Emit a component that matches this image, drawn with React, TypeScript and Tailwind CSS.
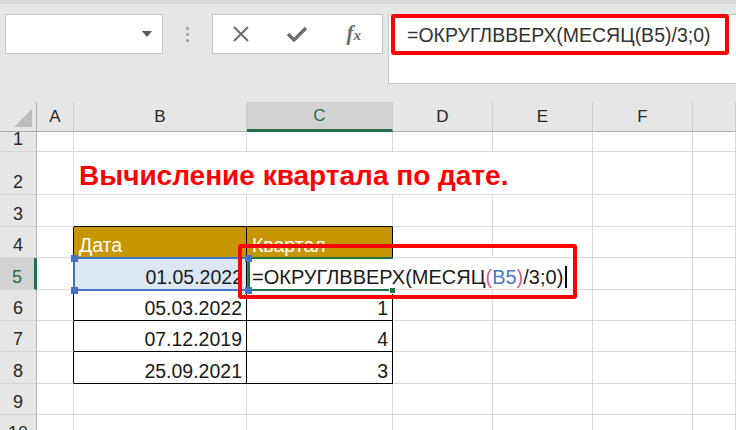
import type { ReactNode } from "react"

const GRID = "border-[#dadada]"

function Cell({
    w,
    b = `border-r border-b ${GRID}`,
    className = "",
    children,
}: {
    w: string
    b?: string
    className?: string
    children?: ReactNode
}) {
    return (
        <div className={`${w} ${b} shrink-0 flex items-end overflow-visible whitespace-nowrap pb-[2px] ${className}`}>
            {children}
        </div>
    )
}

function Row({ n, h, active = false, children }: { n: number; h: string; active?: boolean; children: ReactNode }) {
    return (
        <div className={`flex ${h}`}>
            <div
                className={`w-[37px] shrink-0 flex items-end justify-center pb-[3px] text-[18px] leading-[18px] border-b border-b-[#d4d4d4] overflow-hidden ${
                    active
                        ? "bg-[#d2d2d2] text-[#1e6e42] border-r-[3px] border-r-[#217346]"
                        : "bg-[#e6e6e6] text-[#262626] border-r border-r-[#b4b4b4]"
                }`}
            >
                {n}
            </div>
            {children}
        </div>
    )
}

function FormulaBar() {
    return (
        <div className="h-[102px] bg-[#e6e6e6] border-t-[4px] border-t-[#d9d9d9] flex items-start pt-[10px]">
            <div className="ml-[5px] w-[158px] h-[40px] bg-white border border-[#c6c6c6] flex items-center justify-end pr-[10px]">
                <div className="w-0 h-0 border-l-[5px] border-r-[5px] border-t-[6px] border-l-transparent border-r-transparent border-t-[#5a5a5a]" />
            </div>
            <div className="w-[49px] h-[40px] flex flex-col items-center justify-center gap-[3px]">
                <span className="w-[3px] h-[3px] rounded-full bg-[#9a9a9a]" />
                <span className="w-[3px] h-[3px] rounded-full bg-[#9a9a9a]" />
                <span className="w-[3px] h-[3px] rounded-full bg-[#9a9a9a]" />
            </div>
            <div className="w-[171px] h-[40px] bg-white border border-[#c6c6c6] flex items-center">
                <div className="w-[57px] flex justify-center">
                    <svg width="18" height="16" viewBox="0 0 18 16">
                        <path d="M2 1 L16 15 M16 1 L2 15" stroke="#6b6b6b" strokeWidth="2" fill="none" />
                    </svg>
                </div>
                <div className="w-[57px] flex justify-center">
                    <svg width="22" height="16" viewBox="0 0 22 16">
                        <path d="M2 8 L8 14 L20 2" stroke="#6b6b6b" strokeWidth="3.2" fill="none" strokeLinejoin="round" />
                    </svg>
                </div>
                <div className="w-[57px] flex justify-center">
                    <span className="font-['Liberation_Serif',serif] italic text-[21px] leading-[20px] text-[#6b6b6b] font-bold">
                        f<span className="text-[15px]">x</span>
                    </span>
                </div>
            </div>
            <div className="ml-[5px] flex-1 h-[70px] bg-white border border-r-0 border-[#c6c6c6] pl-[18px] pt-[10px]">
                <span className="text-[19.5px] leading-[20px] text-[#333333]">=ОКРУГЛВВЕРХ(МЕСЯЦ(B5)/3;0)</span>
            </div>
        </div>
    )
}

function ColHeader({ w, label, active = false }: { w: string; label: string; active?: boolean }) {
    return (
        <div
            className={`${w} shrink-0 flex items-center justify-center text-[17px] border-r border-r-[#cdcdcd] ${
                active
                    ? "bg-[#d2d2d2] text-[#1e6e42] border-b-[3px] border-b-[#217346]"
                    : "bg-[#e6e6e6] text-[#262626] border-b border-b-[#ababab]"
            }`}
        >
            {label}
        </div>
    )
}

function Sheet() {
    const black = "border-r border-b border-black"
    return (
        <div className="flex flex-col text-[19.5px] leading-[20px] text-[#1a1a1a]">
            <div className="flex h-[30px]">
                <div className="w-[37px] shrink-0 bg-[#e6e6e6] border-r border-b border-[#ababab] flex items-end justify-end pr-[4px] pb-[4px]">
                    <svg width="18" height="18" viewBox="0 0 18 18">
                        <polygon points="0,18 18,18 18,0" fill="#bdbdbd" />
                    </svg>
                </div>
                <ColHeader w="w-[37px]" label="A" />
                <ColHeader w="w-[173px]" label="B" />
                <ColHeader w="w-[146px]" label="C" active />
                <ColHeader w="w-[100px]" label="D" />
                <ColHeader w="w-[100px]" label="E" />
                <ColHeader w="w-[100px]" label="F" />
                <ColHeader w="w-[43px]" label="" />
            </div>

            <Row n={1} h="h-[20px]">
                <Cell w="w-[37px]" />
                <Cell w="w-[173px]" />
                <Cell w="w-[146px]" />
                <Cell w="w-[100px]" />
                <Cell w="w-[100px]" />
                <Cell w="w-[100px]" />
                <Cell w="w-[43px]" />
            </Row>

            <Row n={2} h="h-[43px]">
                <Cell w="w-[37px]" />
                <Cell w="w-[519px]" className="pl-[5px] pb-[4px]">
                    <span className="text-[28px] leading-[28px] font-bold text-[#ff0000]">Вычисление квартала по дате.</span>
                </Cell>
                <Cell w="w-[100px]" />
                <Cell w="w-[43px]" />
            </Row>

            <Row n={3} h="h-[32px]">
                <Cell w="w-[37px]" />
                <Cell w="w-[173px]" b={`border-r ${GRID} border-b border-b-black`} />
                <Cell w="w-[146px]" b={`border-r ${GRID} border-b border-b-black`} />
                <Cell w="w-[100px]" />
                <Cell w="w-[100px]" />
                <Cell w="w-[100px]" />
                <Cell w="w-[43px]" />
            </Row>

            <Row n={4} h="h-[31px]">
                <Cell w="w-[37px]" b={`border-b ${GRID} border-r border-r-black`} />
                <Cell w="w-[173px]" b={black} className="bg-[#c79500] pl-[5px] text-white">
                    Дата
                </Cell>
                <Cell w="w-[146px]" b={black} className="bg-[#c79500] pl-[5px] text-white">
                    Квартал
                </Cell>
                <Cell w="w-[100px]" />
                <Cell w="w-[100px]" />
                <Cell w="w-[100px]" />
                <Cell w="w-[43px]" />
            </Row>

            <Row n={5} h="h-[32px]" active>
                <Cell w="w-[37px]" b={`border-b ${GRID} border-r border-r-black`} />
                <Cell w="w-[173px]" b={black} className="bg-[#dce6f5] justify-end pr-[3px]">
                    01.05.2022
                </Cell>
                <Cell w="w-[346px]" b={`border-r border-b ${GRID}`} className="bg-white pl-[5px] text-[20px]">
                    <span>=ОКРУГЛВВЕРХ(МЕСЯЦ</span>
                    <span className="text-[#c9628c]">(</span>
                    <span className="text-[#4a78c8]">B5</span>
                    <span className="text-[#c9628c]">)</span>
                    <span>/3;0)</span>
                    <span className="inline-block w-[1.5px] h-[22px] bg-black ml-[2px] mb-[-1px]" />
                </Cell>
                <Cell w="w-[100px]" />
                <Cell w="w-[43px]" />
            </Row>

            {[
                { n: 6, h: "h-[31px]", d: "05.03.2022", q: 1 },
                { n: 7, h: "h-[31px]", d: "07.12.2019", q: 4 },
                { n: 8, h: "h-[32px]", d: "25.09.2021", q: 3 },
            ].map((r) => (
                <Row key={r.n} n={r.n} h={r.h}>
                    <Cell w="w-[37px]" b={`border-b ${GRID} border-r border-r-black`} />
                    <Cell w="w-[173px]" b={black} className="justify-end pr-[4px]">
                        {r.d}
                    </Cell>
                    <Cell w="w-[146px]" b={black} className="justify-end pr-[4px]">
                        {r.q}
                    </Cell>
                    <Cell w="w-[100px]" />
                    <Cell w="w-[100px]" />
                    <Cell w="w-[100px]" />
                    <Cell w="w-[43px]" />
                </Row>
            ))}

            {[
                { n: 9, h: "h-[31px]" },
                { n: 10, h: "h-[31px]" },
            ].map((r) => (
                <Row key={r.n} n={r.n} h={r.h}>
                    <Cell w="w-[37px]" />
                    <Cell w="w-[173px]" />
                    <Cell w="w-[146px]" />
                    <Cell w="w-[100px]" />
                    <Cell w="w-[100px]" />
                    <Cell w="w-[100px]" />
                    <Cell w="w-[43px]" />
                </Row>
            ))}
        </div>
    )
}

export default function App() {
    return (
        <div className="relative w-[736px] h-[430px] overflow-hidden bg-white font-['Liberation_Sans',Arial,sans-serif]">
            <FormulaBar />
            <Sheet />

            {/* reference range B5 */}
            <div className="absolute left-[73px] top-[257px] w-[176px] h-[34px] border-2 border-[#4472c4]" />
            <div className="absolute left-[71px] top-[255px] w-[7px] h-[7px] bg-[#4472c4]" />
            <div className="absolute left-[245px] top-[255px] w-[7px] h-[7px] bg-[#4472c4]" />
            <div className="absolute left-[71px] top-[287px] w-[7px] h-[7px] bg-[#4472c4]" />
            <div className="absolute left-[245px] top-[287px] w-[7px] h-[7px] bg-[#4472c4]" />

            {/* active cell C5 */}
            <div className="absolute left-[252px] top-[257px] w-[141px] h-[2px] bg-[#217346]" />
            <div className="absolute left-[252px] top-[289px] w-[138px] h-[2px] bg-[#217346]" />
            <div className="absolute left-[248px] top-[262px] w-[2px] h-[25px] bg-[#217346]" />
            <div className="absolute left-[389px] top-[287px] w-[7px] h-[7px] bg-[#217346] border border-white" />

            {/* annotations */}
            <div className="absolute left-[391px] top-[14px] w-[338px] h-[41px] border-[4px] border-[#ff0000] rounded-[3px]" />
            <div className="absolute left-[238px] top-[244px] w-[339px] h-[55px] border-[4px] border-[#ff0000] rounded-[3px]" />
        </div>
    )
}
